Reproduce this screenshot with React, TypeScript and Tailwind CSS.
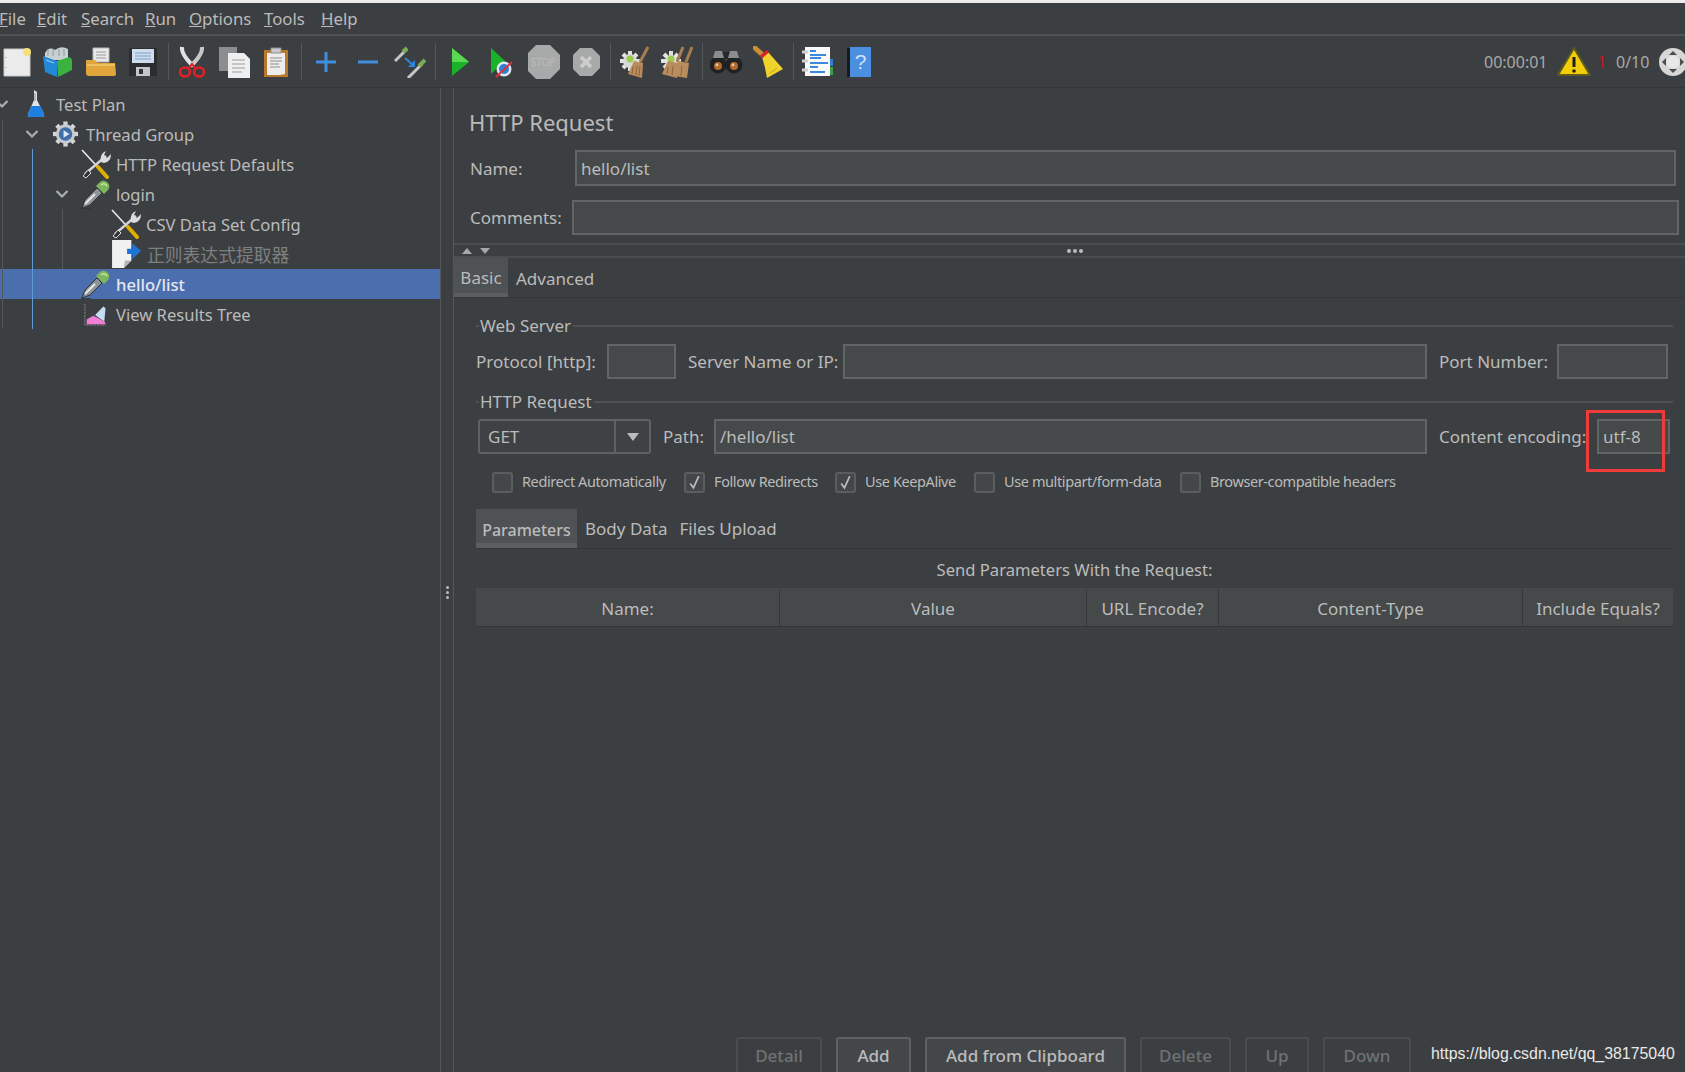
const DROPPER = (
  <>
    <path d="M1 29 L4 21 L16 9 L21 14 L9 26 Z" fill="#8f9498" stroke="#2e3133" strokeWidth="1" />
    <path d="M4 25 L14 15" stroke="#e4e6e8" strokeWidth="2" />
    <path d="M15 7 L23 15 L27 11 Q30 6 26 3 Q22 0 19 3 Z" fill="#7fb55c" />
    <path d="M20 6 Q23 3 26 7" stroke="#c3e5a5" strokeWidth="1.6" fill="none" />
    <path d="M0 30 L10 30" stroke="#2f3234" strokeWidth="1.5" />
  </>
);

const TOOLS = (
  <>
    <path d="M1 1 L24 26" stroke="#e9e9e9" strokeWidth="1.6" />
    <path d="M17 18 L26 28" stroke="#e0b000" strokeWidth="4" strokeLinecap="round" />
    <path d="M25 7 L4 25" stroke="#d4d4d4" strokeWidth="2.4" />
    <path d="M2 27 L7 21 L10 24 L5 29 Z" fill="#333" stroke="#ddd" />
    <path d="M20 13 Q18 5 25 2 L23 6 L26 9 L30 5 Q30 13 23 14 Z" fill="#dcdcdc" />
  </>
);

function DropperIcon() {
  return <svg viewBox="0 0 30 30" className="h-[30px] w-[30px] shrink-0">{DROPPER}</svg>;
}

function ToolsIcon() {
  return <svg viewBox="0 0 30 30" className="h-[30px] w-[30px] shrink-0">{TOOLS}</svg>;
}

function FlaskIcon() {
  return (
    <svg viewBox="0 0 20 30" className="h-[30px] w-[20px]">
      <path d="M8 1 L11 3 L11 11 L18 25 Q19 28 15 28 L5 28 Q1 28 2 25 L8 11 Z" fill="#dfe3e6" />
      <path d="M5.5 17 L14.5 17 L18 25 Q19 28 15 28 L5 28 Q1 28 2 25 Z" fill="#1f7fe0" />
      <path d="M9 4 L9 12" stroke="#8a8a8a" strokeWidth="1" />
    </svg>
  );
}

function GearIcon() {
  return (
    <svg viewBox="0 0 28 28" className="h-[28px] w-[28px]">
      <g stroke="#d4d6d8" strokeWidth="4.5">
        <path d="M14 1 V27" />
        <path d="M1 14 H27" />
        <path d="M5 5 L23 23" />
        <path d="M23 5 L5 23" />
      </g>
      <circle cx="14" cy="14" r="10" fill="#c9ccce" />
      <circle cx="14" cy="14" r="7" fill="#3f6fa8" />
      <path d="M12 10 L18 14 L12 18 Z" fill="#dfe9f3" />
    </svg>
  );
}

function ExtractorIcon() {
  return (
    <svg viewBox="0 0 28 28" className="h-[30px] w-[30px] shrink-0">
      <path d="M1 1 H19 V20 L12 27 H1 Z" fill="#f1f1f1" />
      <path d="M12 27 L13 20 H19 Z" fill="#b5b5b5" />
      <path d="M15 9 H20 V4 L28 11 L20 19 V14 H15 Z" fill="#1e73d8" />
    </svg>
  );
}

function ResultsIcon() {
  return (
    <svg viewBox="0 0 26 26" className="h-[26px] w-[24px]">
      <path d="M1 2 V25 H24" stroke="#8d8d8d" strokeWidth="1" fill="none" strokeDasharray="2 1" />
      <path d="M3 24 L3 19 L10 15 L16 18 L23 22 L23 24 Z" fill="#f17fd8" />
      <path d="M12 14 L21 5 Q24 6 23 10 L22 21 L16 17 Z" fill="#c7dcf4" />
    </svg>
  );
}

function Chevron() {
  return (
    <svg viewBox="0 0 14 10" className="h-[10px] w-[14px]">
      <path d="M1.5 2 L7 7.5 L12.5 2" fill="none" stroke="#a9b0b5" strokeWidth="2.2" />
    </svg>
  );
}

const nodes = [
  { label: "Test Plan", indent: "-ml-[11px]", open: true, icon: <FlaskIcon /> },
  { label: "Thread Group", indent: "ml-[19px]", open: true, icon: <GearIcon /> },
  { label: "HTTP Request Defaults", indent: "ml-[49px]", icon: <ToolsIcon /> },
  { label: "login", indent: "ml-[49px]", open: true, icon: <DropperIcon /> },
  { label: "CSV Data Set Config", indent: "ml-[79px]", icon: <ToolsIcon /> },
  { label: "正则表达式提取器", indent: "ml-[79px]", icon: <ExtractorIcon />, disabled: true },
  { label: "hello/list", indent: "ml-[49px]", icon: <DropperIcon />, selected: true },
  { label: "View Results Tree", indent: "ml-[49px]", icon: <ResultsIcon /> },
];

function Tree() {
  return (
    <div className="relative w-[441px] shrink-0 border-r border-[#555759] pt-px text-[16.6px]">
      {nodes.map((n) => (
        <div key={n.label} className={`flex h-[30px] items-center ${n.selected ? "bg-[#4b6eaf] font-medium text-[#e4e7ee]" : ""}`}>
          <div className={`flex w-[33px] shrink-0 items-center pl-[6px] ${n.indent}`}>
            {n.open && <Chevron />}
          </div>
          <div className="flex w-[27px] shrink-0 items-center justify-center">{n.icon}</div>
          <span className={`ml-[7px] pt-[2px] ${n.disabled ? "ml-[8px] text-[17.8px] text-[#7d7f80]" : ""}`}>{n.label}</span>
        </div>
      ))}
      <div className="absolute left-[2px] top-[31px] h-[209px] w-px bg-[#55585a]" />
      <div className="absolute left-[32px] top-[61px] h-[180px] w-px bg-[#5b9bd5]" />
      <div className="absolute left-[62px] top-[121px] h-[60px] w-px bg-[#55585a]" />
    </div>
  );
}

function Sep({ className }: { className: string }) {
  return <div className={`h-[37px] w-px shrink-0 bg-[#55585a] ${className}`} />;
}

function Slot({ children }: { children: React.ReactNode }) {
  return <div className="flex h-[32px] w-[32px] shrink-0 items-center justify-center">{children}</div>;
}

function Toolbar() {
  return (
    <div className="flex h-[52px] shrink-0 items-center border-b border-[#333537] pl-px">
      <div className="flex gap-[10px]">
        <Slot>
          <svg viewBox="0 0 30 30" className="h-[30px] w-[30px]">
            <path d="M2 2 H24 L28 6 V29 H2 Z" fill="#ececec" stroke="#c8c8c8" />
            <circle cx="25" cy="5" r="4" fill="#f5e27a" />
            <path d="M4 10 V11 M4 20 V21" stroke="#a0a0a0" />
          </svg>
        </Slot>
        <Slot>
          <svg viewBox="2 0 32 32" className="h-[32px] w-[32px]">
            <path d="M4 7 Q8 0 14 4 Q20 -1 27 3 V14 H4 Z" fill="#c8d0d4" />
            <path d="M7 3 V10 M12 3 V10 M18 3 V10 M23 3 V10" stroke="#8b9aa2" />
            <path d="M2 10 L16 15 V31 L4 26 Z" fill="#2288d8" />
            <path d="M16 15 L28 11 Q31 12 31 15 V24 L17 31 Z" fill="#3bb23f" />
            <path d="M5 14 L13 17" stroke="#9dd2f2" />
          </svg>
        </Slot>
        <Slot>
          <svg viewBox="0 0 32 32" className="h-[32px] w-[32px]">
            <path d="M8 2 H24 V16 H8 Z" fill="#e9e9e9" stroke="#b5b5b5" />
            <path d="M11 6 H21 M11 9 H21 M11 12 H21" stroke="#9a9a9a" />
            <path d="M1 14 H10 L13 17 H30 L31 28 Q31 30 28 30 H4 Q1 30 1 27 Z" fill="#e0a63c" />
            <path d="M2 19 H30" stroke="#f2c96c" strokeWidth="1.5" />
          </svg>
        </Slot>
        <Slot>
          <svg viewBox="0 0 30 30" className="h-[30px] w-[30px]">
            <path d="M1 1 H29 V29 H1 Z" fill="#2b2d2f" />
            <path d="M4 2 H26 V16 H4 Z" fill="#cfdcec" />
            <path d="M7 6 H23 M7 9 H23 M7 12 H23" stroke="#7ba0cc" />
            <path d="M8 20 H22 V29 H8 Z" fill="#c6c6c6" />
            <path d="M11 22 H15 V27 H11 Z" fill="#333" />
          </svg>
        </Slot>
      </div>
      <Sep className="ml-[9px] mr-[7px]" />
      <div className="flex gap-[10px]">
        <Slot>
          <svg viewBox="0 0 28 32" className="h-[32px] w-[28px]">
            <path d="M4 1 Q3 8 15 20" stroke="#e2e2e2" strokeWidth="4" fill="none" />
            <path d="M24 1 Q25 8 13 20" stroke="#c8c8c8" strokeWidth="4" fill="none" />
            <ellipse cx="7" cy="26" rx="5" ry="4.5" fill="none" stroke="#e21f26" strokeWidth="2.6" />
            <ellipse cx="21" cy="26" rx="5" ry="4.5" fill="none" stroke="#e21f26" strokeWidth="2.6" />
            <path d="M11 22 L14 18 L17 22" stroke="#e21f26" strokeWidth="2" fill="none" />
          </svg>
        </Slot>
        <Slot>
          <svg viewBox="0 0 32 32" className="h-[32px] w-[32px]">
            <path d="M1 1 H19 V25 H1 Z" fill="#8b8e90" />
            <path d="M10 7 H26 L32 13 V32 H10 Z" fill="#efefef" />
            <path d="M14 14 H27 M14 18 H27 M14 22 H27 M14 26 H24" stroke="#9c9c9c" />
          </svg>
        </Slot>
        <Slot>
          <svg viewBox="0 0 26 32" className="h-[32px] w-[26px]">
            <path d="M1 4 H25 V31 H1 Z" fill="#b87a2a" />
            <path d="M4 7 H22 V28 L17 29 H4 Z" fill="#ededed" />
            <path d="M7 12 H19 M7 15 H19 M7 18 H16 M7 21 H17" stroke="#8c8c8c" />
            <path d="M8 2 H18 V7 H8 Z" fill="#c9c9c9" stroke="#8e8e8e" />
          </svg>
        </Slot>
      </div>
      <Sep className="ml-[9px] mr-[8px]" />
      <div className="flex gap-[10px]">
        <Slot>
          <svg viewBox="0 0 22 22" className="h-[22px] w-[22px]">
            <path d="M11 1 V21 M1 11 H21" stroke="#3f8ee0" strokeWidth="3" />
          </svg>
        </Slot>
        <Slot>
          <svg viewBox="0 0 22 22" className="h-[22px] w-[22px]">
            <path d="M1 11 H21" stroke="#3f8ee0" strokeWidth="3" />
          </svg>
        </Slot>
        <Slot>
          <svg viewBox="0 0 32 32" className="h-[32px] w-[32px]">
            <path d="M1 15 L13 3" stroke="#c4c8ca" strokeWidth="3" />
            <path d="M9 6 L13 2" stroke="#76ad55" strokeWidth="4" />
            <path d="M14 32 L28 18" stroke="#c4c8ca" strokeWidth="3" />
            <path d="M25 20 L31 14" stroke="#76ad55" strokeWidth="4" />
            <path d="M11 12 L19 19" stroke="#2d84dc" strokeWidth="2" />
            <path d="M21 14 V21 H14 Z" fill="#2d84dc" />
          </svg>
        </Slot>
      </div>
      <Sep className="ml-[9px] mr-[9px]" />
      <div className="flex gap-[10px]">
        <Slot>
          <svg viewBox="1 0 18 30" className="h-[30px] w-[18px]">
            <path d="M1 1 L18 15 L1 29 Z" fill="#19b32a" />
            <path d="M1 1 L18 15 L1 15 Z" fill="#5bd84f" />
          </svg>
        </Slot>
        <Slot>
          <svg viewBox="2 0 24 32" className="h-[32px] w-[24px]">
            <path d="M1 1 L16 15 L1 29 Z" fill="#19b32a" />
            <circle cx="15" cy="23" r="7.5" fill="#dfe8f2" />
            <circle cx="15" cy="23" r="5" fill="#2f7fd4" />
            <path d="M7 31 L23 16" stroke="#e0303a" strokeWidth="2" />
          </svg>
        </Slot>
        <Slot>
          <svg viewBox="2 0 34 34" className="h-[34px] w-[34px] shrink-0">
            <path d="M10 0 H24 L34 10 V24 L24 34 H10 L0 24 V10 Z" fill="#a8a9a9" />
            <text x="17" y="21" textAnchor="middle" fontSize="10" fontFamily="Noto Sans" fill="#bcbcbc">STOP</text>
          </svg>
        </Slot>
        <Slot>
          <svg viewBox="1 0 28 28" className="h-[28px] w-[28px]">
            <path d="M8 0 H20 L28 8 V20 L20 28 H8 L0 20 V8 Z" fill="#a8a9a9" />
            <path d="M9 9 L19 19 M19 9 L9 19" stroke="#cdcdcd" strokeWidth="3.5" />
          </svg>
        </Slot>
      </div>
      <Sep className="ml-[7px] mr-[7px]" />
      <div className="flex gap-[10px]">
        <Slot>
          <svg viewBox="0 0 32 32" className="h-[32px] w-[32px]">
            <g stroke="#e2e2e2" strokeWidth="4">
              <path d="M12 5 V25 M2 15 H22 M5 8 L19 22 M19 8 L5 22" />
            </g>
            <circle cx="12" cy="15" r="7" fill="#d8d8d8" />
            <circle cx="12" cy="13" r="3.5" fill="#9acb4a" />
            <path d="M30 1 L22 16" stroke="#a97e4f" strokeWidth="3" />
            <path d="M16 15 L25 17 L24 32 L10 28 Z" fill="#b98c5d" />
            <path d="M15 21 L14 28 M19 20 L18 29 M22 20 L21 30" stroke="#8d663d" />
          </svg>
        </Slot>
        <Slot>
          <svg viewBox="0 0 34 32" className="h-[32px] w-[34px] shrink-0">
            <g stroke="#e2e2e2" strokeWidth="4">
              <path d="M12 5 V25 M2 15 H22 M5 8 L19 22 M19 8 L5 22" />
            </g>
            <circle cx="12" cy="13" r="3.5" fill="#9acb4a" />
            <path d="M24 1 L18 16 M33 1 L27 16" stroke="#a97e4f" strokeWidth="3" />
            <path d="M9 15 L19 17 L18 32 L3 28 Z" fill="#b98c5d" />
            <path d="M19 15 L30 17 L28 32 L15 30 Z" fill="#b98c5d" />
            <path d="M9 21 L8 28 M14 20 L13 29 M23 20 L22 30" stroke="#8d663d" />
          </svg>
        </Slot>
      </div>
      <Sep className="ml-[10px] mr-[8px]" />
      <div className="flex gap-[10px]">
        <Slot>
          <svg viewBox="1 0 34 26" className="h-[26px] w-[34px] shrink-0">
            <path d="M12 3 H22 V10 H12 Z" fill="#26282a" />
            <circle cx="9" cy="16" r="8.5" fill="#1f2123" />
            <circle cx="25" cy="16" r="8.5" fill="#1f2123" />
            <path d="M6 2 H13 L15 9 H4 Z M21 2 H28 L30 9 H19 Z" fill="#8a8d90" />
            <circle cx="9" cy="17" r="4" fill="#b06a2a" />
            <circle cx="25" cy="17" r="4" fill="#b06a2a" />
            <circle cx="8" cy="16" r="1.4" fill="#e8c9a0" />
            <circle cx="24" cy="16" r="1.4" fill="#e8c9a0" />
          </svg>
        </Slot>
        <Slot>
          <svg viewBox="0 0 32 32" className="h-[32px] w-[32px]">
            <path d="M2 2 L12 11" stroke="#c98f33" strokeWidth="5" strokeLinecap="round" />
            <path d="M9 11 L15 6 L30 23 L14 32 Q12 20 9 11 Z" fill="#f0d22c" />
            <path d="M8 11 L15 5" stroke="#d1232a" strokeWidth="3.5" />
            <path d="M16 28 L24 22" stroke="#c9a818" />
          </svg>
        </Slot>
      </div>
      <Sep className="ml-[8px] mr-[8px]" />
      <div className="flex gap-[10px]">
        <Slot>
          <svg viewBox="1 0 32 32" className="h-[32px] w-[32px]">
            <path d="M4 1 H29 V30 H4 Z" fill="#fafafa" />
            <path d="M9 5 H15 M9 9 H25 M9 12 H20 M9 17 H27 M9 21 H17 M9 26 H24" stroke="#3a88e0" strokeWidth="2" />
            <path d="M1 6 H7 M1 15 H7 M1 24 H7" stroke="#d0d0d0" strokeWidth="3" />
            <path d="M29 13 H32 V20 H29 Z" fill="#2d7fd0" />
            <path d="M29 21 H32 V29 H29 Z" fill="#3d9e46" />
          </svg>
        </Slot>
        <Slot>
          <svg viewBox="2 0 26 32" className="h-[32px] w-[26px]">
            <path d="M0 2 H6 V31 H0 Z" fill="#17191a" />
            <path d="M5 1 H26 V31 H5 Z" fill="#4b8fe0" />
            <text x="15.5" y="23" textAnchor="middle" fontSize="21" fontFamily="Liberation Sans" fill="#cfe2f8">?</text>
          </svg>
        </Slot>
      </div>
      <div className="ml-auto flex items-center text-[16px] text-[#a9a9a9]">
        <span className="w-[73px]">00:00:01</span>
        <svg viewBox="0 0 34 30" className="h-[30px] w-[34px]">
          <path d="M17 1 L33 28 H1 Z" fill="#f3cd05" stroke="#5f5a20" strokeWidth="2" strokeLinejoin="round" />
          <path d="M17 10 V20" stroke="#1e1e1e" strokeWidth="3" />
          <circle cx="17" cy="24" r="1.8" fill="#1e1e1e" />
        </svg>
        <span className="ml-[6px] w-[19px] text-[#c8141e]">1</span>
        <span className="w-[42px]">0/10</span>
        <svg viewBox="0 0 27 28" className="h-[28px] w-[27px]">
          <circle cx="15" cy="14" r="14" fill="#d7d7d7" />
          <circle cx="15" cy="14" r="6.5" fill="#e8e8e8" />
          <path d="M15 3 L19 7 H11 Z M15 25 L11 21 H19 Z M4 14 L8 10 V18 Z M26 14 L22 18 V10 Z" fill="#4d4d4d" />
        </svg>
      </div>
    </div>
  );
}

function Field({ value, className }: { value?: string; className: string }) {
  return (
    <div className={`flex shrink-0 items-center border-2 border-[#626566] bg-[#45494a] pl-[4px] pt-px text-[#bbbbbb] ${className}`}>
      {value}
    </div>
  );
}

function Label({ text, className }: { text: string; className: string }) {
  return <span className={`flex shrink-0 items-center whitespace-nowrap pt-px ${className}`}>{text}</span>;
}

function GroupTitle({ title }: { title: string }) {
  return (
    <div className="flex h-[20px] items-center">
      <div className="h-[2px] w-[3px] bg-[#505355]" />
      <span className="ml-[1px] mr-[2px]">{title}</span>
      <div className="h-[2px] flex-1 bg-[#505355]" />
    </div>
  );
}

function Check({ label, checked, className }: { label: string; checked?: boolean; className: string }) {
  return (
    <div className={`flex shrink-0 items-center ${className}`}>
      <div className="flex h-[21px] w-[21px] shrink-0 items-center justify-center rounded-[3px] border-2 border-[#5b5e60] bg-[#43474a]">
        {checked && (
          <svg viewBox="0 0 12 14" className="h-[15px] w-[13px]">
            <path d="M2 8 L5 12 L10 1" fill="none" stroke="#bdbdbd" strokeWidth="1.6" />
          </svg>
        )}
      </div>
      <span className="ml-[9px] whitespace-nowrap text-[14.5px] tracking-[-0.4px]">{label}</span>
    </div>
  );
}

function Button({ label, enabled, className }: { label: string; enabled?: boolean; className: string }) {
  return (
    <div
      className={`flex h-[35px] shrink-0 items-center justify-center rounded-t-[3px] border-2 border-b-0 font-medium ${
        enabled ? "border-[#5e6162] bg-[#43474a] text-[#bbbbbb]" : "border-[#4a4d4f] text-[#6f7274]"
      } ${className}`}
    >
      {label}
    </div>
  );
}

const columns = [
  { label: "Name:", width: "w-[304px]" },
  { label: "Value", width: "w-[307px]" },
  { label: "URL Encode?", width: "w-[132px]" },
  { label: "Content-Type", width: "w-[304px]" },
  { label: "Include Equals?", width: "flex-1" },
];

export default function App() {
  return (
    <div className="flex h-[1072px] w-[1685px] flex-col overflow-hidden bg-[#3c3f41] font-['Noto_Sans','Noto_Sans_CJK_SC',sans-serif] text-[17px] text-[#bbbbbb]">
      <div className="h-[3px] shrink-0 bg-[#ececec]" />
      <div className="-ml-px flex h-[33px] shrink-0 items-center border-b-2 border-[#505355] pt-px text-[16.8px]">
        <span className="w-[38px]"><u>F</u>ile</span>
        <span className="w-[44px]"><u>E</u>dit</span>
        <span className="w-[64px]"><u>S</u>earch</span>
        <span className="w-[44px]"><u>R</u>un</span>
        <span className="w-[75px]"><u>O</u>ptions</span>
        <span className="w-[57px]"><u>T</u>ools</span>
        <span><u>H</u>elp</span>
      </div>
      <Toolbar />
      <div className="flex min-h-0 flex-1">
        <Tree />
        <div className="flex w-[13px] shrink-0 flex-col items-center justify-center gap-[2px] border-r border-[#555759] pt-[24px]">
          <div className="h-[3px] w-[3px] rounded-full bg-[#bbbbbb]" />
          <div className="h-[3px] w-[3px] rounded-full bg-[#bbbbbb]" />
          <div className="h-[3px] w-[3px] rounded-full bg-[#bbbbbb]" />
        </div>
        <div className="flex min-w-0 flex-1 flex-col">
          <div className="mt-[16px] flex h-[36px] items-center pl-[15px] text-[22px]">HTTP Request</div>
          <div className="mt-[10px] flex h-[36px] items-stretch pl-[16px]">
            <Label text="Name:" className="w-[105px]" />
            <Field value="hello/list" className="w-[1101px]" />
          </div>
          <div className="mt-[14px] flex h-[35px] items-stretch pl-[16px]">
            <Label text="Comments:" className="w-[102px]" />
            <Field className="w-[1107px]" />
          </div>
          <div className="mt-[8px] flex h-[15px] shrink-0 items-center border-y-2 border-[#4a4d4f] pl-[8px]">
            <svg viewBox="0 0 28 8" className="h-[8px] w-[28px]">
              <path d="M0 7 L5 1 L10 7 Z M18 1 H28 L23 7 Z" fill="#a5a8aa" />
            </svg>
            <div className="ml-[577px] flex gap-[2px]">
              <div className="h-[4px] w-[4px] rounded-full bg-[#bbbbbb]" />
              <div className="h-[4px] w-[4px] rounded-full bg-[#bbbbbb]" />
              <div className="h-[4px] w-[4px] rounded-full bg-[#bbbbbb]" />
            </div>
          </div>
          <div className="flex h-[40px] shrink-0 border-b border-[#333537]">
            <div className="flex w-[54px] items-center justify-center border-b-[4px] border-[#5a5e61] bg-[#4e5254] pt-[5px]">Basic</div>
            <div className="ml-[8px] flex items-center pt-[2px]">Advanced</div>
          </div>
          <div className="flex flex-col pl-[22px] pr-[12px]">
            <div className="mt-[18px]"><GroupTitle title="Web Server" /></div>
            <div className="mt-[8px] flex h-[35px] items-stretch">
              <Label text="Protocol [http]:" className="w-[131px]" />
              <Field className="w-[69px]" />
              <Label text="Server Name or IP:" className="ml-[12px] w-[155px]" />
              <Field className="w-[584px]" />
              <Label text="Port Number:" className="ml-[12px] w-[118px]" />
              <Field className="w-[111px]" />
            </div>
            <div className="mt-[13px]"><GroupTitle title="HTTP Request" /></div>
            <div className="mt-[7px] flex h-[35px] items-stretch pl-[2px]">
              <div className="flex w-[173px] shrink-0 rounded-[3px] border-2 border-[#5f6263] bg-[#3f4244]">
                <span className="flex w-[136px] items-center border-r-2 border-[#5f6263] pl-[8px]">GET</span>
                <div className="flex flex-1 items-center justify-center">
                  <svg viewBox="0 0 12 8" className="h-[8px] w-[12px]"><path d="M0 0 H12 L6 8 Z" fill="#bbbbbb" /></svg>
                </div>
              </div>
              <Label text="Path:" className="ml-[12px] w-[51px]" />
              <Field value="/hello/list" className="w-[713px]" />
              <Label text="Content encoding:" className="ml-[12px] w-[158px]" />
              <div className="relative">
                <Field value="utf-8" className="h-full w-[73px]" />
                <div className="absolute -left-[11px] -top-[9px] h-[62px] w-[79px] border-[3px] border-[#f03b3b]" />
              </div>
            </div>
            <div className="mt-[18px] flex h-[20px] items-center">
              <Check label="Redirect Automatically" className="ml-[16px] w-[192px]" />
              <Check label="Follow Redirects" checked className="w-[151px]" />
              <Check label="Use KeepAlive" checked className="w-[139px]" />
              <Check label="Use multipart/form-data" className="w-[206px]" />
              <Check label="Browser-compatible headers" />
            </div>
            <div className="mt-[17px] flex h-[40px] border-b border-[#333537]">
              <div className="flex w-[101px] items-center justify-center border-b-[5px] border-[#5a5e61] bg-[#4e5254] pt-[7px] text-[16px] font-medium">Parameters</div>
              <div className="ml-[8px] flex items-center">Body Data</div>
              <div className="ml-[12px] flex items-center">Files Upload</div>
            </div>
            <div className="mt-[11px] flex h-[20px] items-center justify-center text-[16.6px]">Send Parameters With the Request:</div>
            <div className="mt-[8px] flex h-[39px] border-b border-[#333537] bg-[#45494a] pt-px">
              {columns.map((c) => (
                <div key={c.label} className={`flex items-center justify-center border-r border-[#36393a] pt-[2px] last:border-r-0 ${c.width}`}>
                  {c.label}
                </div>
              ))}
            </div>
          </div>
          <div className="mt-auto flex items-center pl-[282px]">
            <Button label="Detail" className="w-[86px]" />
            <Button label="Add" enabled className="ml-[14px] w-[75px]" />
            <Button label="Add from Clipboard" enabled className="ml-[14px] w-[201px]" />
            <Button label="Delete" className="ml-[14px] w-[91px]" />
            <Button label="Up" className="ml-[14px] w-[64px]" />
            <Button label="Down" className="ml-[14px] w-[88px]" />
            <span className="-mt-[2px] ml-[20px] whitespace-nowrap font-['Liberation_Sans',sans-serif] text-[15.9px] text-[#e8e8e8]">
              https://blog.csdn.net/qq_38175040
            </span>
          </div>
        </div>
      </div>
    </div>
  );
}
